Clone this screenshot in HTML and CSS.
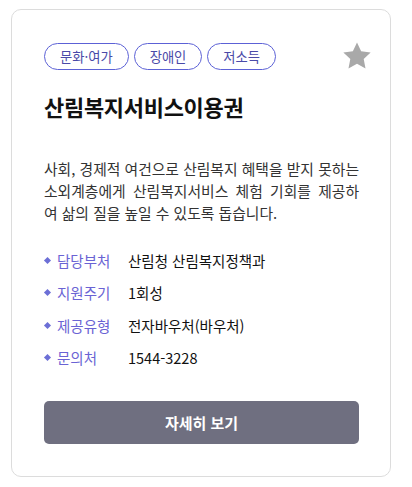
FILE: index.html
```html
<!DOCTYPE html>
<html lang="ko">
<head>
    <meta charset="UTF-8">
    <meta name="viewport" content="width=device-width, initial-scale=1.0">
    <title>산림복지서비스이용권</title>
    <link rel="stylesheet" href="styles.css">
</head>
<body>
    <div class="card">
        <div class="card-top">
            <div class="tags">
                <span class="tag">문화·여가</span>
                <span class="tag">장애인</span>
                <span class="tag">저소득</span>
            </div>
            <button class="star" type="button" aria-label="즐겨찾기">
                <svg width="30" height="28" viewBox="0 0 24 23">
                    <path d="M12 0.5l3.4 7.1 7.8 1-5.7 5.4 1.5 7.7L12 17.9l-7 3.8 1.5-7.7L0.8 8.6l7.8-1z" fill="#a9a9a9"/>
                </svg>
            </button>
        </div>

        <h2 class="title">산림복지서비스이용권</h2>

        <p class="desc">사회, 경제적 여건으로 산림복지 혜택을 받지 못하는 소외계층에게 산림복지서비스 체험 기회를 제공하여 삶의 질을 높일 수 있도록 돕습니다.</p>

        <ul class="info">
            <li><span class="label">담당부처</span><span class="value">산림청 산림복지정책과</span></li>
            <li><span class="label">지원주기</span><span class="value">1회성</span></li>
            <li><span class="label">제공유형</span><span class="value">전자바우처(바우처)</span></li>
            <li><span class="label">문의처</span><span class="value">1544-3228</span></li>
        </ul>

        <a class="more" href="#">자세히 보기</a>
    </div>
</body>
</html>
```

FILE: styles.css
```css
body {
    margin: 0;
    padding: 9px 21px 10px 11px;
    font-family: "Noto Sans CJK KR", "Noto Sans", sans-serif;
    color: #222;
    background: #fff;
}
.card {
    border: 1px solid #dcdcdc;
    border-radius: 10px;
    padding: 32px 31px 32px 32px;
}
.card-top {
    display: flex;
    justify-content: space-between;
    align-items: center;
}
.tags {
    display: flex;
    gap: 5px;
}
.tag {
    display: inline-block;
    height: 27px;
    line-height: 25px;
    box-sizing: border-box;
    padding: 0 15px;
    border: 1px solid #5c61d6;
    border-radius: 14px;
    font-size: 13.3px;
    color: #4a4aa8;
}
.star {
    border: 0;
    background: none;
    padding: 0;
    margin-right: -13px;
    display: flex;
}
.title {
    margin: 20px 0 0;
    font-size: 22px;
    font-weight: 700;
    line-height: 32px;
    color: #111;
    letter-spacing: -0.3px;
}
.desc {
    margin: 36px 0 0;
    font-size: 14.8px;
    line-height: 22px;
    color: #333;
    text-align: justify;
}
.info {
    list-style: none;
    margin: 20px 0 0;
    padding: 0;
}
.info li {
    display: flex;
    align-items: center;
    height: 32.5px;
    font-size: 14.5px;
}
.info li::before {
    content: "";
    width: 5px;
    height: 5px;
    background: #6c6fd6;
    transform: rotate(45deg);
    margin: 0 7px 0 1px;
}
.label {
    width: 71px;
    color: #6a63d4;
}
.value {
    color: #111;
}
.more {
    display: block;
    margin-top: 27px;
    height: 43px;
    line-height: 43px;
    border-radius: 5px;
    background: #6f6f80;
    color: #fff;
    text-align: center;
    font-size: 15px;
    font-weight: 700;
    text-decoration: none;
}
```
